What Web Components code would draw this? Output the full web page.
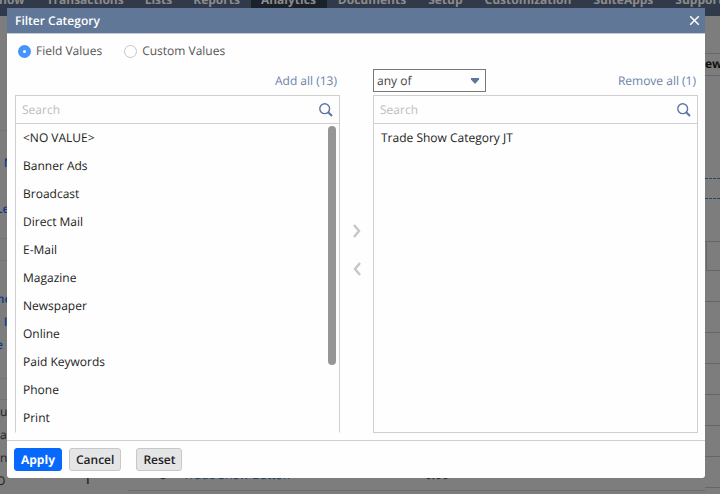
<!DOCTYPE html>
<html lang="en">
<head>
<meta charset="utf-8">
<title>Filter Category</title>
<style>
html,body{height:100%;margin:0}
body{font:12px/16px "Open Sans","Noto Sans",sans-serif;color:#333;overflow:hidden;background:#7d7d7d;text-rendering:geometricPrecision}
</style>
</head>
<body>
<filter-screen></filter-screen>
<script>
const define = (name, html, setup) => {
  const t = document.createElement('template');
  t.innerHTML = html;
  customElements.define(name, class extends HTMLElement {
    constructor() {
      super();
      this.attachShadow({mode: 'open'}).append(t.content.cloneNode(true));
    }
    connectedCallback() { if (setup) setup(this, this.shadowRoot); }
  });
};

define('nav-bar', `<style>
:host{display:block;height:16px;overflow:hidden;background:#303a4b}
nav{display:flex;margin-top:-12px}
a{padding:0 11px 0 10px;font:700 12px/24px "Open Sans","Noto Sans",sans-serif;height:28px;color:#8c8c8c;text-decoration:none;white-space:nowrap}
a:first-child{padding-left:0;margin-left:-1px;padding-right:12px}
a.on{background:#1b212b}
a.on~a{padding:0 11px}
</style><nav aria-label="Main"><a href="#">now</a><a href="#">Transactions</a><a href="#">Lists</a><a href="#">Reports</a><a href="#" class="on">Analytics</a><a href="#">Documents</a><a href="#">Setup</a><a href="#">Customization</a><a href="#">SuiteApps</a><a href="#">Support</a></nav>`);

define('report-page', `<style>
:host{display:flex;flex-direction:column;height:100%}
main{flex:1;display:grid;grid-template-columns:7px 1fr 15px;min-height:0;overflow:hidden}
.left{display:flex;flex-direction:column;font-size:12px;color:#222}
.left>*{flex:none;height:23px;line-height:23px;white-space:nowrap}
.left a{color:#0c3a86;text-decoration:none;font-weight:600}
.left .s{height:34px;border-bottom:1px solid #737373;box-sizing:border-box}
.left .l{height:115px}
.left .m{margin-left:-7px}
.left .n{margin-left:-4px}
.right{display:flex;flex-direction:column;overflow:hidden}
.right>*{flex:none;box-sizing:border-box;border-bottom:1px solid #666}
.right .head{margin-top:37px;height:23px;border-top:1px solid #686868;font:700 12px/20px "Open Sans",sans-serif;color:#111}
.right .dash{height:103px;border-bottom:1px dashed #2c4666}
.right .dash.b{height:20px}
.right .gap{height:43px}
.right .cell{height:29px;border-left:1px solid #666;margin-left:1px}
.right .row{height:31px}
.mid{display:flex;align-items:flex-end;padding-bottom:3px}
table{width:100%;table-layout:fixed;border-collapse:collapse;font-size:12px;line-height:16px;color:#222}
td{padding:0 0 7px;height:22px;vertical-align:bottom;white-space:nowrap}
td:first-child{padding-bottom:3px}
td:nth-child(n+2){border-bottom:1px solid #6c6c6c}
table a{color:#173967;text-decoration:none}
</style><nav-bar></nav-bar><main>
<div class="left"><div class="s l"></div><div class="s" style="height:20px;border:0"></div><a class="m" href="#">n M</a><div></div><a class="n" href="#">Le</a><div class="s" style="height:19px"></div><div class="s" style="height:22px"></div><div class="s" style="height:26px;border:0"></div><a class="m" href="#">me</a><a class="m" href="#">n I</a><a class="n" href="#">e</a><div class="s" style="height:23px"></div><div class="s" style="height:21px"></div><span>u</span><span>a</span><span>n</span><span class="n">O</span></div>
<div class="mid"><table><colgroup><col style="width:121px"><col style="width:55px"><col style="width:242px"><col></colgroup><tr><td style="padding-left:79px;font-weight:600">I</td><td style="padding-left:32px">5</td><td><a href="#">Trade Show Button</a></td><td>0.00</td></tr></table></div>
<div class="right"><div class="head">ew</div><div class="dash"></div><div class="dash b"></div><div class="gap"></div><div class="cell"></div><div class="row"></div><div class="row"></div><div class="row"></div><div class="row"></div><div class="row"></div><div class="row"></div><div class="row"></div></div>
</main>`);

define('search-box', `<style>
:host{display:block}
label{display:flex;align-items:center;height:27px;padding:0 6px;border-bottom:1px solid #cfcfcf}
input{flex:1;min-width:0;border:0;outline:0;padding:0;background:none;font:12px/16px "Open Sans","Noto Sans",sans-serif;color:#333;text-rendering:inherit}
input::placeholder{color:#bdbdbd;opacity:1}
svg{flex:none;display:block}
</style><label><input type="text" placeholder="Search" aria-label="Search"><svg width="14" height="14" viewBox="0 0 14 14" fill="none" stroke="#5b76a0"><circle cx="5.7" cy="5.7" r="4.9" stroke-width="1.4"/><path d="M9.2 9.2L13 13" stroke-width="2"/></svg></label>`);

define('value-list', `<style>
:host{display:flex;flex-direction:column;border:1px solid #cfcfcf;box-sizing:border-box;min-height:0}
.body{flex:1;display:flex;min-height:0;overflow:hidden}
ul{flex:1;list-style:none;margin:0;padding:0}
::slotted(li){line-height:28px;height:28px;padding:0 7px;font-weight:500;color:#222;white-space:nowrap;list-style:none}
.track{display:none;width:8px;padding:2px 3px 0 3px}
.thumb{width:8px;height:78%;border-radius:4px;background:#969696}
:host([scroll]) .track{display:block}
:host([scroll]){border-bottom-color:transparent}
</style><search-box></search-box><div class="body"><ul><slot></slot></ul><div class="track"><div class="thumb"></div></div></div>`);

define('radio-option', `<style>
:host{display:block}
label{display:flex;align-items:center;gap:5px;color:#555}
input{appearance:none;box-sizing:border-box;width:13px;height:13px;margin:0;border:1px solid #c6c6c6;border-radius:50%;background:#fff}
input:checked{border:5px solid #4593fc}
</style><label><input type="radio"><span><slot></slot></span></label>`, (el, r) => {
  r.querySelector('input').checked = el.hasAttribute('checked');
});

define('push-button', `<style>
:host{display:block}
button{box-sizing:border-box;height:23px;padding:0 6px;border:1px solid #c8c8c8;border-radius:3px;background:#e4e5e7;color:#222;font:600 12px/20px "Open Sans","Noto Sans",sans-serif;display:block;text-rendering:inherit}
:host([primary]) button{background:#0768fd;border-color:#0768fd;color:#fff;font-weight:700}
</style><button type="button"><slot></slot></button>`);

define('filter-dialog', `<style>
:host{display:flex;flex-direction:column;background:#fefefe;border-radius:0 0 3px 3px;overflow:hidden}
header{display:flex;align-items:center;justify-content:space-between;height:25px;padding:0 5px 0 8px;background:#617798;border-bottom:1px solid #c5cbd8}
h1{margin:0;font:600 12px/24px "Open Sans","Noto Sans",sans-serif;color:#fff}
.x{border:0;background:none;padding:0;width:11px;height:11px}
svg{display:block}
.radios{display:flex;gap:22px;padding:9px 11px 0}
.pick{flex:1;min-height:0;display:grid;grid-template-columns:325fr 33px 325fr;grid-template-rows:29px minmax(0,1fr);padding:7px 7px 7px 8px}
.top{display:flex;justify-content:space-between;align-items:center}
.top.a{justify-content:flex-end}
.top a{color:#6c83a8;text-decoration:none;padding:1px 2px 0 0}
.top.a a{padding-right:3px}
.sel{position:relative;display:block}
select{display:block;appearance:none;box-sizing:border-box;width:113px;height:23px;border:1px solid #777;border-radius:0;background:#fefefe;padding:0 20px 0 3px;font:12px/18px "Open Sans","Noto Sans",sans-serif;color:#444;text-rendering:inherit}
.sel svg{position:absolute;right:7px;top:9px;pointer-events:none}
.move{display:flex;flex-direction:column;align-items:center;justify-content:center;gap:24px;padding-bottom:28px}
.move button{border:0;background:none;padding:0}
footer{display:flex;gap:7px;padding:7px;border-top:1px solid #cfcfcf}
.reset{margin-left:8px}
</style>
<header><h1>Filter Category</h1><button class="x" aria-label="Close"><svg width="11" height="11" viewBox="0 0 11 11"><path d="M1.2 1.2L9.8 9.8M9.8 1.2L1.2 9.8" stroke="#fff" stroke-width="1.5"/></svg></button></header>
<div class="radios"><radio-option checked>Field Values</radio-option><radio-option>Custom Values</radio-option></div>
<div class="pick">
<div class="top a"><a href="#">Add all (13)</a></div><div></div>
<div class="top"><span class="sel"><select aria-label="Match"><option>any of</option></select><svg width="8" height="6" viewBox="0 0 8 6"><path d="M0 0H8V1.5L4.5 5.5H3.5L0 1.5Z" fill="#5b76a0"/></svg></span><a href="#">Remove all (1)</a></div>
<value-list scroll><li>&lt;NO VALUE&gt;</li><li>Banner Ads</li><li>Broadcast</li><li>Direct Mail</li><li>E-Mail</li><li>Magazine</li><li>Newspaper</li><li>Online</li><li>Paid Keywords</li><li>Phone</li><li>Print</li></value-list>
<div class="move"><button aria-label="Add"><svg width="8" height="14" viewBox="0 0 8 14"><path d="M1 1L6 7L1 13" fill="none" stroke="#c6c6c6" stroke-width="2.4"/></svg></button><button aria-label="Remove"><svg width="8" height="14" viewBox="0 0 8 14"><path d="M7 1L2 7L7 13" fill="none" stroke="#c6c6c6" stroke-width="2.4"/></svg></button></div>
<value-list><li>Trade Show Category JT</li></value-list>
</div>
<footer><push-button primary>Apply</push-button><push-button>Cancel</push-button><push-button class="reset">Reset</push-button></footer>`);

define('filter-screen', `<style>
:host{display:block;position:relative;height:100%;overflow:hidden}
filter-dialog{position:absolute;inset:8px 15px 16px 7px}
</style><report-page></report-page><filter-dialog role="dialog" aria-label="Filter Category"></filter-dialog>`);
</script>
</body>
</html>
